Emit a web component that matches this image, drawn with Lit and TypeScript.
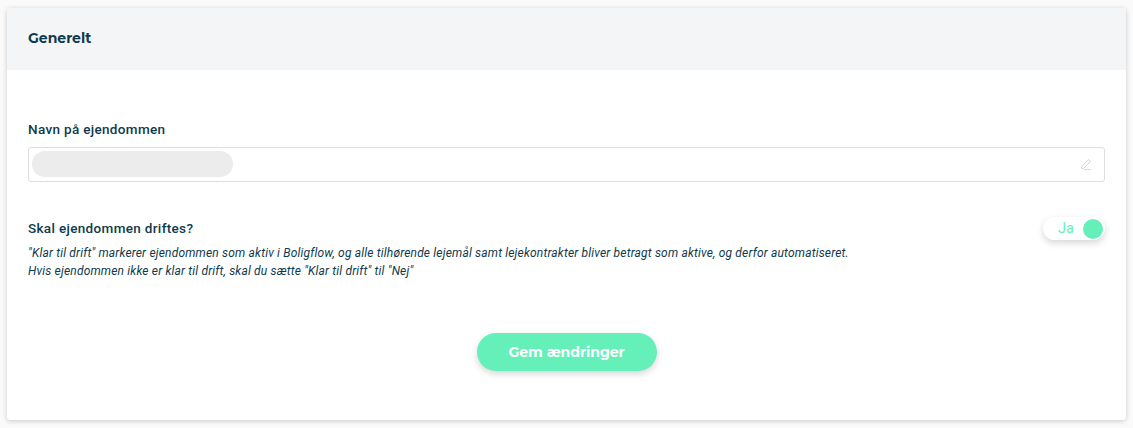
import { LitElement, html, css } from "lit";
import { customElement } from "lit/decorators.js";

@customElement("app-root")
export class AppRoot extends LitElement {
  static styles = css`
    :host { display: block; width: 1133px; height: 428px; background: #fafafa; font-family: Roboto, "Noto Sans", sans-serif; color: #0e3a4d; box-sizing: border-box; padding: 8px 7px 8px 7px; }
    .card { background: #fff; border-radius: 3px; box-shadow: 0 1px 5px rgba(0,0,0,.2); height: 412px; display: flex; flex-direction: column; }
    .head { height: 62px; box-sizing: border-box; padding: 0 21px 3px; background: #f4f5f7; display: flex; align-items: center; font: 700 14px Montserrat, Inter, sans-serif; flex: none; }
    .body { padding: 50px 21px 0; display: flex; flex-direction: column; }
    label, .q { font-size: 13.5px; font-weight: 500; line-height: 18px; letter-spacing: .33px; }
    .input { margin-top: 9px; height: 35px; box-sizing: border-box; border: 1px solid #dcdedf; border-radius: 3px; display: flex; align-items: center; justify-content: space-between; padding: 0 12px 2px 3px; }
    .blur { width: 201px; height: 26px; border-radius: 13px; background: #ececec; }
    .row { margin-top: 37px; display: flex; justify-content: space-between; align-items: flex-start; }
    .desc { margin-top: 7px; font-style: italic; font-size: 12px; line-height: 18px; letter-spacing: .18px; }
    .toggle { margin-top: -2px; width: 62px; height: 23px; border-radius: 12px; background: #fff; box-shadow: 0 3px 7px rgba(0,0,0,.16); display: flex; align-items: center; justify-content: space-between; box-sizing: border-box; padding: 0 2px 0 15px; color: #66f0b9; font-size: 14.5px; font-weight: 400; }
    .knob { width: 20px; height: 20px; border-radius: 50%; background: #66f0b9; }
    .actions { margin-top: 53px; display: flex; justify-content: center; }
    button { width: 180px; height: 38px; border: 0; border-radius: 19px; background: #66f0b9; color: #fff; font: 700 14px Montserrat, Inter, sans-serif; box-shadow: 0 3px 7px rgba(0,0,0,.16); }
  `;
  render() {
    return html`<div class="card">
      <div class="head">Generelt</div>
      <div class="body">
        <label>Navn på ejendommen</label>
        <div class="input"><div class="blur"></div>
          <svg width="12" height="12" viewBox="0 0 12 12" fill="none" stroke="#d5d8da" stroke-width="1"><path d="M1.5 9 L8.5 1.5 L10.5 3.5 L3.5 10.5 L1.5 10.5 Z M4 11.5 H11"/></svg>
        </div>
        <div class="row">
          <div>
            <div class="q">Skal ejendommen driftes?</div>
            <div class="desc">"Klar til drift" markerer ejendommen som aktiv i Boligflow, og alle tilhørende lejemål samt lejekontrakter bliver betragt som aktive, og derfor automatiseret.<br>Hvis ejendommen ikke er klar til drift, skal du sætte "Klar til drift" til "Nej"</div>
          </div>
          <div class="toggle"><span>Ja</span><span class="knob"></span></div>
        </div>
        <div class="actions"><button>Gem ændringer</button></div>
      </div>
    </div>`;
  }
}
